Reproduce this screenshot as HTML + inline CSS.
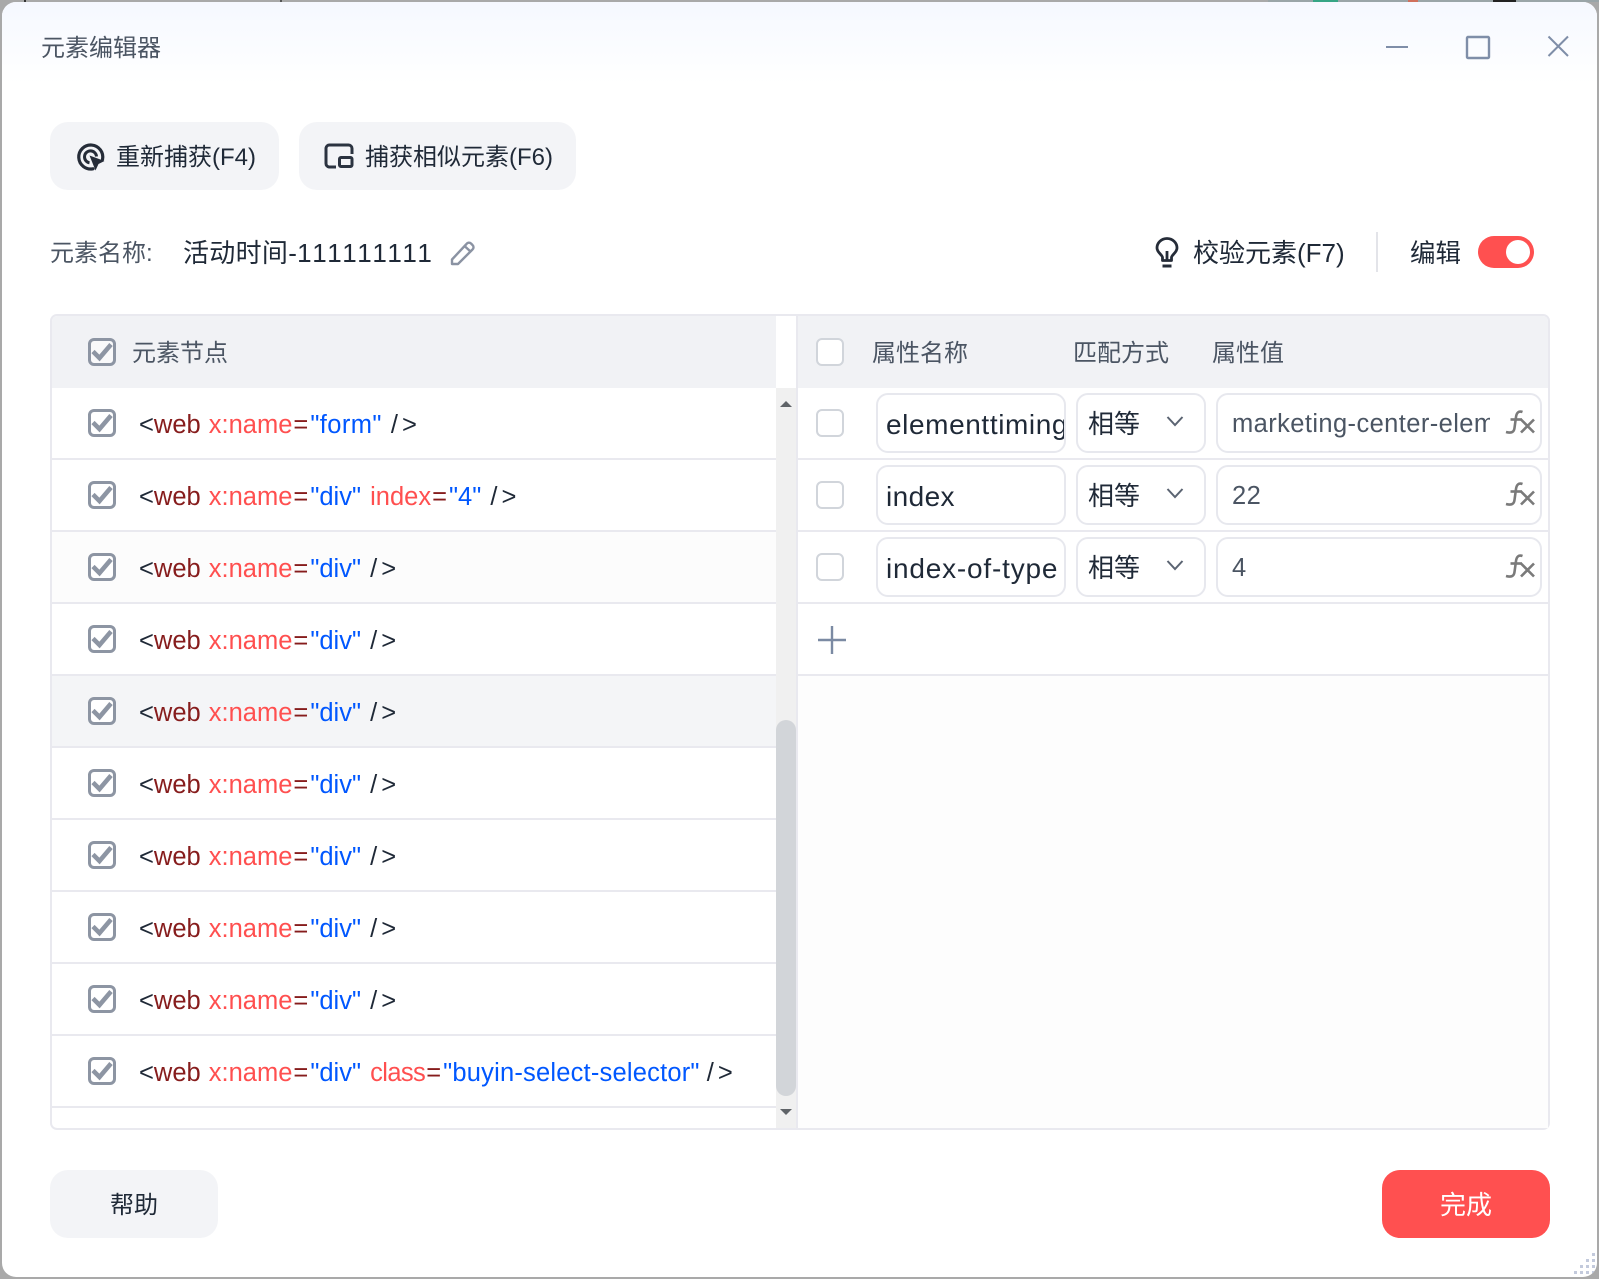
<!DOCTYPE html>
<html lang="zh">
<head>
<meta charset="utf-8">
<title>元素编辑器</title>
<style>
html,body{margin:0;padding:0;width:1599px;height:1279px;overflow:hidden;background:#a9a9a9}
body{position:relative;font-family:"Liberation Sans","Noto Sans CJK SC",sans-serif;color:#1f2937}
*{box-sizing:border-box}
.a{position:absolute}
.t{position:absolute;white-space:nowrap;line-height:40px;height:40px}
#win{position:absolute;left:2px;top:2px;width:1595px;height:1275px;border-radius:14px;overflow:hidden;background:#fff}
#stage{position:absolute;left:-2px;top:-2px;width:1599px;height:1279px}
.grad{position:absolute;left:0;top:0;width:1599px;height:84px;background:linear-gradient(#f5f8ff,#fff)}
.btn{position:absolute;background:#f3f4f7;border-radius:18px}
.g{color:#4b5563}
.rl{position:absolute;left:52px;width:724px;height:2px;background:#e9e9ef}
.rr{position:absolute;left:798px;width:750px;height:2px;background:#e9e9ef}
.cb{position:absolute;width:28px;height:28px;border:3px solid #8d95a3;border-radius:6px;background:#fff}
.cb.hd{background:#f9f9fa}
.cb svg{position:absolute;left:0;top:0}
.ce{position:absolute;left:816px;width:28px;height:28px;border:2.5px solid #d1d5db;border-radius:6px;background:#fff}
.row{font-size:25.5px;color:#1f2937}
.w{color:#861c1c}.n{color:#ff4f4f;margin-left:1px}.v{color:#0057ff;margin-right:2px}
.e{color:#861c1c;margin:0 2px 0 1px}
.c{letter-spacing:4px}
.in{position:absolute;height:60px;border:2px solid #e7e8ee;border-radius:12px;background:#fff;overflow:hidden}
.in span{position:absolute;line-height:40px;white-space:nowrap}
.nm{font-size:28px;letter-spacing:.4px}
.nm span{top:10px;left:8px}
.se{font-size:26px}
.se span{top:9px;left:10px}
.va{font-size:25.5px;letter-spacing:.4px}
.va span{top:9px;left:14px}
.fx{position:absolute;left:1504px}
.ch{position:absolute;left:1166px}
.dot{position:absolute;width:3px;height:3px;background:#c3cadc}
</style>
</head>
<body>
<!-- desktop behind -->
<div class="a" style="left:1268px;top:0;width:331px;height:2px;background:#9aa5a8"></div>
<div class="a" style="left:1313px;top:0;width:25px;height:2px;background:#36a585"></div>
<div class="a" style="left:1408px;top:0;width:10px;height:2px;background:#d0705c"></div>
<div class="a" style="left:1493px;top:0;width:23px;height:2px;background:#222"></div>
<div class="a" style="left:24px;top:0;width:2px;height:2px;background:#333"></div>
<div class="a" style="left:280px;top:0;width:2px;height:2px;background:#555"></div>

<div id="win"><div id="stage">
<div class="grad"></div>

<!-- title -->
<div class="t g" style="left:41px;top:29px;font-size:24px">元素编辑器</div>
<svg class="a" style="left:1380px;top:30px" width="190" height="34" viewBox="0 0 190 34" fill="none" stroke="#7f8ea8" stroke-width="2">
<path d="M6 17H28"/>
<rect x="87" y="7" width="22" height="21" rx="1" stroke-width="2.4"/>
<path d="M168.500 6.500L188 26M188 6.500L168.500 26"/>
</svg>

<!-- top buttons -->
<div class="btn" style="left:50px;top:122px;width:229px;height:68px"></div>
<svg class="a" style="left:76px;top:142px" width="30" height="30" viewBox="0 0 30 30" fill="none">
<path d="M26.500 17.500A12 12 0 1 0 17 26.800" stroke="#252c38" stroke-width="3.200" stroke-linecap="round"/>
<path d="M20.500 14.500A6 6 0 1 0 13.500 20.800" stroke="#252c38" stroke-width="3"/>
<path d="M13.500 13.500L28.500 19L22.500 22L19.500 28.500Z" fill="#252c38"/>
</svg>
<div class="t" style="left:116px;top:138px;font-size:24px">重新捕获(F4)</div>

<div class="btn" style="left:299px;top:122px;width:277px;height:68px"></div>
<svg class="a" style="left:324px;top:143px" width="30" height="26" viewBox="0 0 30 26" fill="none" stroke="#2b3340" stroke-width="3">
<path d="M12 24H5A3.500 3.500 0 0 1 2 20.500V5A3.500 3.500 0 0 1 5.500 2H24.500A3.500 3.500 0 0 1 28 5.500V11"/>
<rect x="15.500" y="14.500" width="12.500" height="9" rx="1.500"/>
</svg>
<div class="t" style="left:365px;top:138px;font-size:24px">捕获相似元素(F6)</div>

<!-- name row -->
<div class="t g" style="left:50px;top:234px;font-size:24px">元素名称:</div>
<div class="t" style="left:183px;top:233px;font-size:26px;letter-spacing:.3px">活动时间-<span style="letter-spacing:2.500px">111111111</span></div>
<svg class="a" style="left:449px;top:240px" width="27" height="26" viewBox="0 0 27 26" fill="none" stroke="#8b93a3" stroke-width="2.400" stroke-linejoin="round">
<path d="M3 19.500L17.500 4A3 3 0 0 1 22 3.500L23.500 5A3 3 0 0 1 23.500 9.500L9 24H3Z"/><path d="M15.500 6L21.500 11.500"/>
</svg>

<svg class="a" style="left:1154px;top:237px" width="26" height="32" viewBox="0 0 26 32" fill="none" stroke="#252c38" stroke-width="2.800">
<path d="M8.500 23.500V20.500C8.500 18 3 15.500 3 11A10 9.500 0 0 1 23 11C23 15.500 17.500 18 17.500 20.500V23.500Z" stroke-linejoin="round"/>
<path d="M13 14V23"/><path d="M8.500 29H17.500" stroke-width="3"/>
</svg>
<div class="t" style="left:1193px;top:233px;font-size:26px">校验元素(F7)</div>
<div class="a" style="left:1376px;top:232px;width:2px;height:40px;background:#e3e4e9"></div>
<div class="t" style="left:1410px;top:234px;font-size:25.500px">编辑</div>
<div class="a" style="left:1478px;top:236px;width:56px;height:32px;border-radius:16px;background:#ff5050"></div>
<div class="a" style="left:1506px;top:240px;width:24px;height:24px;border-radius:50%;background:#fff"></div>

<!-- panel -->
<div class="a" style="left:50px;top:314px;width:1500px;height:816px;border:2px solid #e9e9ef;border-radius:7px;background:#fff"></div>
<div class="a" style="left:52px;top:316px;width:724px;height:72px;background:#f1f2f5;border-top-left-radius:5px"></div>
<div class="a" style="left:798px;top:316px;width:750px;height:72px;background:#f1f2f5;border-top-right-radius:5px"></div>
<div class="a" style="left:798px;top:676px;width:750px;height:452px;background:#fdfdfd"></div>
<div class="a" style="left:796px;top:316px;width:2px;height:812px;background:#e9e9ef"></div>

<!-- row backgrounds -->
<div class="a" style="left:52px;top:532px;width:724px;height:70px;background:#fcfcfc"></div>
<div class="a" style="left:52px;top:676px;width:724px;height:70px;background:#f4f5f7"></div>

<!-- row lines -->
<div class="rl" style="top:458px"></div><div class="rl" style="top:530px"></div><div class="rl" style="top:602px"></div><div class="rl" style="top:674px"></div><div class="rl" style="top:746px"></div><div class="rl" style="top:818px"></div><div class="rl" style="top:890px"></div><div class="rl" style="top:962px"></div><div class="rl" style="top:1034px"></div><div class="rl" style="top:1106px"></div>
<div class="rr" style="top:458px"></div><div class="rr" style="top:530px"></div><div class="rr" style="top:602px"></div><div class="rr" style="top:674px"></div>

<!-- scrollbar -->
<div class="a" style="left:776px;top:388px;width:20px;height:740px;background:#f0f0f0"></div>
<div class="a" style="left:776px;top:720px;width:20px;height:376px;border-radius:10px;background:#d2d5d9"></div>
<svg class="a" style="left:776px;top:396px" width="20" height="14"><path d="M4 11L10 5L16 11Z" fill="#5f6368"/></svg>
<svg class="a" style="left:776px;top:1105px" width="20" height="14"><path d="M4 4L10 10L16 4Z" fill="#5f6368"/></svg>

<!-- header -->
<div class="cb hd" style="left:88px;top:338px"><svg width="22" height="22" viewBox="0 0 22 22" fill="none"><path d="M2 10.500L8.500 17L20 3.500" stroke="#8d95a3" stroke-width="4.500"/></svg></div>
<div class="t g" style="left:132px;top:334px;font-size:24px">元素节点</div>
<div class="ce" style="top:338px"></div>
<div class="t g" style="left:872px;top:334px;font-size:24px">属性名称</div>
<div class="t g" style="left:1073px;top:334px;font-size:24px">匹配方式</div>
<div class="t g" style="left:1212px;top:334px;font-size:24px">属性值</div>

<!-- left checkboxes -->
<div class="cb" style="left:88px;top:409px"><svg width="22" height="22" viewBox="0 0 22 22" fill="none"><path d="M2 10.500L8.500 17L20 3.500" stroke="#8d95a3" stroke-width="4.500"/></svg></div>
<div class="cb" style="left:88px;top:481px"><svg width="22" height="22" viewBox="0 0 22 22" fill="none"><path d="M2 10.500L8.500 17L20 3.500" stroke="#8d95a3" stroke-width="4.500"/></svg></div>
<div class="cb" style="left:88px;top:553px"><svg width="22" height="22" viewBox="0 0 22 22" fill="none"><path d="M2 10.500L8.500 17L20 3.500" stroke="#8d95a3" stroke-width="4.500"/></svg></div>
<div class="cb" style="left:88px;top:625px"><svg width="22" height="22" viewBox="0 0 22 22" fill="none"><path d="M2 10.500L8.500 17L20 3.500" stroke="#8d95a3" stroke-width="4.500"/></svg></div>
<div class="cb" style="left:88px;top:697px"><svg width="22" height="22" viewBox="0 0 22 22" fill="none"><path d="M2 10.500L8.500 17L20 3.500" stroke="#8d95a3" stroke-width="4.500"/></svg></div>
<div class="cb" style="left:88px;top:769px"><svg width="22" height="22" viewBox="0 0 22 22" fill="none"><path d="M2 10.500L8.500 17L20 3.500" stroke="#8d95a3" stroke-width="4.500"/></svg></div>
<div class="cb" style="left:88px;top:841px"><svg width="22" height="22" viewBox="0 0 22 22" fill="none"><path d="M2 10.500L8.500 17L20 3.500" stroke="#8d95a3" stroke-width="4.500"/></svg></div>
<div class="cb" style="left:88px;top:913px"><svg width="22" height="22" viewBox="0 0 22 22" fill="none"><path d="M2 10.500L8.500 17L20 3.500" stroke="#8d95a3" stroke-width="4.500"/></svg></div>
<div class="cb" style="left:88px;top:985px"><svg width="22" height="22" viewBox="0 0 22 22" fill="none"><path d="M2 10.500L8.500 17L20 3.500" stroke="#8d95a3" stroke-width="4.500"/></svg></div>
<div class="cb" style="left:88px;top:1057px"><svg width="22" height="22" viewBox="0 0 22 22" fill="none"><path d="M2 10.500L8.500 17L20 3.500" stroke="#8d95a3" stroke-width="4.500"/></svg></div>

<!-- left rows -->
<div class="t row" style="left:139px;top:405px">&lt;<span class="w">web</span> <span class="n">x:name</span><span class="e">=</span><span class="v" style="letter-spacing:.4px">"form"</span> <span class="c">/&gt;</span></div>
<div class="t row" style="left:139px;top:477px">&lt;<span class="w">web</span> <span class="n">x:name</span><span class="e">=</span><span class="v">"div"</span> <span class="n" style="margin-left:0">index</span><span class="e">=</span><span class="v">"4"</span> <span class="c">/&gt;</span></div>
<div class="t row" style="left:139px;top:549px">&lt;<span class="w">web</span> <span class="n">x:name</span><span class="e">=</span><span class="v">"div"</span> <span class="c">/&gt;</span></div>
<div class="t row" style="left:139px;top:621px">&lt;<span class="w">web</span> <span class="n">x:name</span><span class="e">=</span><span class="v">"div"</span> <span class="c">/&gt;</span></div>
<div class="t row" style="left:139px;top:693px">&lt;<span class="w">web</span> <span class="n">x:name</span><span class="e">=</span><span class="v">"div"</span> <span class="c">/&gt;</span></div>
<div class="t row" style="left:139px;top:765px">&lt;<span class="w">web</span> <span class="n">x:name</span><span class="e">=</span><span class="v">"div"</span> <span class="c">/&gt;</span></div>
<div class="t row" style="left:139px;top:837px">&lt;<span class="w">web</span> <span class="n">x:name</span><span class="e">=</span><span class="v">"div"</span> <span class="c">/&gt;</span></div>
<div class="t row" style="left:139px;top:909px">&lt;<span class="w">web</span> <span class="n">x:name</span><span class="e">=</span><span class="v">"div"</span> <span class="c">/&gt;</span></div>
<div class="t row" style="left:139px;top:981px">&lt;<span class="w">web</span> <span class="n">x:name</span><span class="e">=</span><span class="v">"div"</span> <span class="c">/&gt;</span></div>
<div class="t row" style="left:139px;top:1053px">&lt;<span class="w">web</span> <span class="n">x:name</span><span class="e">=</span><span class="v">"div"</span> <span class="n" style="margin-left:0;letter-spacing:-.6px">class</span><span class="e">=</span><span class="v" style="letter-spacing:.2px;margin-right:0">"buyin-select-selector"</span> <span class="c">/&gt;</span></div>

<!-- right rows -->
<div class="ce" style="top:409px"></div>
<div class="ce" style="top:481px"></div>
<div class="ce" style="top:553px"></div>

<div class="in nm" style="left:876px;top:393px;width:190px"><span style="letter-spacing:.6px">elementtiming</span></div>
<div class="in nm" style="left:876px;top:465px;width:190px"><span>index</span></div>
<div class="in nm" style="left:876px;top:537px;width:190px"><span style="letter-spacing:.8px">index-of-type</span></div>

<div class="in se" style="left:1076px;top:393px;width:130px"><span>相等</span></div>
<div class="in se" style="left:1076px;top:465px;width:130px"><span>相等</span></div>
<div class="in se" style="left:1076px;top:537px;width:130px"><span>相等</span></div>
<svg class="ch" style="top:414px" width="18" height="16" viewBox="0 0 18 16" fill="none" stroke="#5b6472" stroke-width="2"><path d="M1.500 3L9 11L16.500 3"/></svg>
<svg class="ch" style="top:486px" width="18" height="16" viewBox="0 0 18 16" fill="none" stroke="#5b6472" stroke-width="2"><path d="M1.500 3L9 11L16.500 3"/></svg>
<svg class="ch" style="top:558px" width="18" height="16" viewBox="0 0 18 16" fill="none" stroke="#5b6472" stroke-width="2"><path d="M1.500 3L9 11L16.500 3"/></svg>

<div class="in g va" style="left:1216px;top:393px;width:326px"><span style="width:258px;overflow:hidden">marketing-center-element</span></div>
<div class="in g va" style="left:1216px;top:465px;width:326px"><span>22</span></div>
<div class="in g va" style="left:1216px;top:537px;width:326px"><span>4</span></div>
<svg class="fx" style="top:409px" width="32" height="26" viewBox="0 0 32 26" fill="none" stroke="#7a7a7a" stroke-width="2.600"><path d="M18.500 3C14.500 1.500 12.500 4 12 8L10.500 19C10 23 7.500 24.500 2 23"/><path d="M6.500 10.500H18"/><path d="M17 10.500L30 23.500M30 10.500L17 23.500"/></svg>
<svg class="fx" style="top:481px" width="32" height="26" viewBox="0 0 32 26" fill="none" stroke="#7a7a7a" stroke-width="2.600"><path d="M18.500 3C14.500 1.500 12.500 4 12 8L10.500 19C10 23 7.500 24.500 2 23"/><path d="M6.500 10.500H18"/><path d="M17 10.500L30 23.500M30 10.500L17 23.500"/></svg>
<svg class="fx" style="top:553px" width="32" height="26" viewBox="0 0 32 26" fill="none" stroke="#7a7a7a" stroke-width="2.600"><path d="M18.500 3C14.500 1.500 12.500 4 12 8L10.500 19C10 23 7.500 24.500 2 23"/><path d="M6.500 10.500H18"/><path d="M17 10.500L30 23.500M30 10.500L17 23.500"/></svg>

<!-- plus -->
<svg class="a" style="left:818px;top:626px" width="28" height="28" viewBox="0 0 28 28" stroke="#7b8aa3" stroke-width="2.400"><path d="M0 14H28M14 0V28"/></svg>

<!-- footer -->
<div class="btn" style="left:50px;top:1170px;width:168px;height:68px"></div>
<div class="t" style="left:110px;top:1186px;font-size:24px">帮助</div>
<div class="a" style="left:1382px;top:1170px;width:168px;height:68px;border-radius:18px;background:#ff5050"></div>
<div class="t" style="left:1440px;top:1185px;font-size:26px;color:#fff">完成</div>

<!-- resize grip -->
<div class="dot" style="left:1592px;top:1253px"></div>
<div class="dot" style="left:1586px;top:1259px"></div><div class="dot" style="left:1592px;top:1259px"></div>
<div class="dot" style="left:1580px;top:1265px"></div><div class="dot" style="left:1586px;top:1265px"></div><div class="dot" style="left:1592px;top:1265px"></div>
<div class="dot" style="left:1574px;top:1271px"></div><div class="dot" style="left:1580px;top:1271px"></div><div class="dot" style="left:1586px;top:1271px"></div><div class="dot" style="left:1592px;top:1271px"></div>
</div></div>
</body>
</html>
